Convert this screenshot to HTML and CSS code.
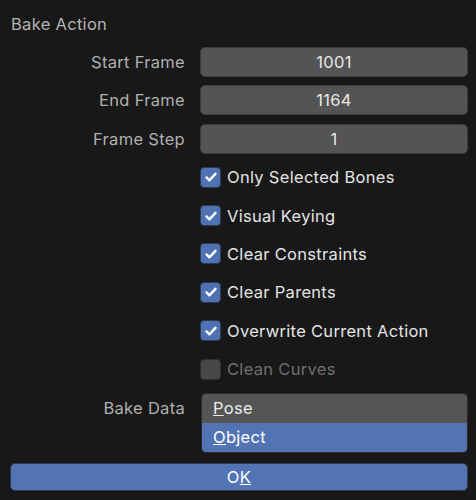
FILE: index.html
```html
<!DOCTYPE html>
<html lang="en">
<head>
    <meta charset="UTF-8">
    <meta name="viewport" content="width=device-width, initial-scale=1.0">
    <title>Bake Action</title>
    <link rel="stylesheet" href="styles.css">
</head>
<body>
    <div class="dialog">
        <div class="title">Bake Action</div>
        <div class="form">
            <div class="label">Start Frame</div>
            <div class="field">1001</div>

            <div class="label">End Frame</div>
            <div class="field">1164</div>

            <div class="label">Frame Step</div>
            <div class="field">1</div>

            <div class="label"></div>
            <label class="check"><span class="box on"><svg viewBox="0 0 20 20"><path d="M5 10.5l3.2 3.2L15 6.5"/></svg></span>Only Selected Bones</label>

            <div class="label"></div>
            <label class="check"><span class="box on"><svg viewBox="0 0 20 20"><path d="M5 10.5l3.2 3.2L15 6.5"/></svg></span>Visual Keying</label>

            <div class="label"></div>
            <label class="check"><span class="box on"><svg viewBox="0 0 20 20"><path d="M5 10.5l3.2 3.2L15 6.5"/></svg></span>Clear Constraints</label>

            <div class="label"></div>
            <label class="check"><span class="box on"><svg viewBox="0 0 20 20"><path d="M5 10.5l3.2 3.2L15 6.5"/></svg></span>Clear Parents</label>

            <div class="label"></div>
            <label class="check"><span class="box on"><svg viewBox="0 0 20 20"><path d="M5 10.5l3.2 3.2L15 6.5"/></svg></span>Overwrite Current Action</label>

            <div class="label"></div>
            <label class="check disabled"><span class="box"></span>Clean Curves</label>

            <div class="label">Bake Data</div>
            <div class="dropdown">
                <div class="option"><u>P</u>ose</div>
                <div class="option selected"><u>O</u>bject</div>
            </div>
        </div>
        <button class="ok-button">O<u>K</u></button>
    </div>
</body>
</html>
```

FILE: styles.css
```css
body {
    margin: 0;
    background-color: #181818;
    font-family: Inter, 'Noto Sans', sans-serif;
    font-size: 16.5px;
    letter-spacing: 0.3px;
    color: #e6e6e6;
}
.dialog {
    width: 476px;
    height: 500px;
    box-sizing: border-box;
    padding: 0 8px 0 10px;
}
.title {
    height: 47px;
    line-height: 49px;
    padding-left: 1px;
    color: #b4b4b4;
}
.form {
    display: grid;
    grid-template-columns: 175px 1fr;
    column-gap: 15px;
    row-gap: 8.4px;
    grid-auto-rows: 30px;
}
.label {
    text-align: right;
    line-height: 30px;
    color: #b0b0b0;
}
.field {
    background-color: #545454;
    border: 1px solid #3c3c3c;
    border-radius: 5px;
    text-align: center;
    line-height: 28px;
    color: #e8e8e8;
}
.check {
    display: flex;
    align-items: center;
    gap: 6px;
    color: #e4e4e4;
}
.box {
    width: 19px;
    height: 19px;
    border: 1px solid #2e3a50;
    border-radius: 4px;
    background-color: #4f72b5;
    display: flex;
    align-items: center;
    justify-content: center;
}
.box svg {
    width: 18px;
    height: 18px;
    fill: none;
    stroke: #ffffff;
    stroke-width: 2.6;
    stroke-linecap: round;
    stroke-linejoin: round;
}
.check.disabled {
    color: #707070;
}
.check.disabled .box {
    background-color: #484848;
    border-color: #2f2f2f;
}
.dropdown {
    margin-left: 1px;
    grid-row: span 2;
    align-self: start;
    border-radius: 5px;
    overflow: hidden;
    border: 1px solid #2c2c2c;
}
.option {
    height: 29px;
    line-height: 29px;
    padding-left: 11px;
    background-color: #555555;
    color: #ececec;
}
.option.selected {
    background-color: #5274b4;
    color: #ffffff;
}
.ok-button {
    display: block;
    width: 100%;
    height: 28px;
    margin-top: 2px;
    border: 1px solid #2e3a50;
    border-radius: 5px;
    background-color: #5274b4;
    color: #ffffff;
    font-family: inherit;
    font-size: 16.5px;
    letter-spacing: 0.3px;
    padding: 0;
}
```
